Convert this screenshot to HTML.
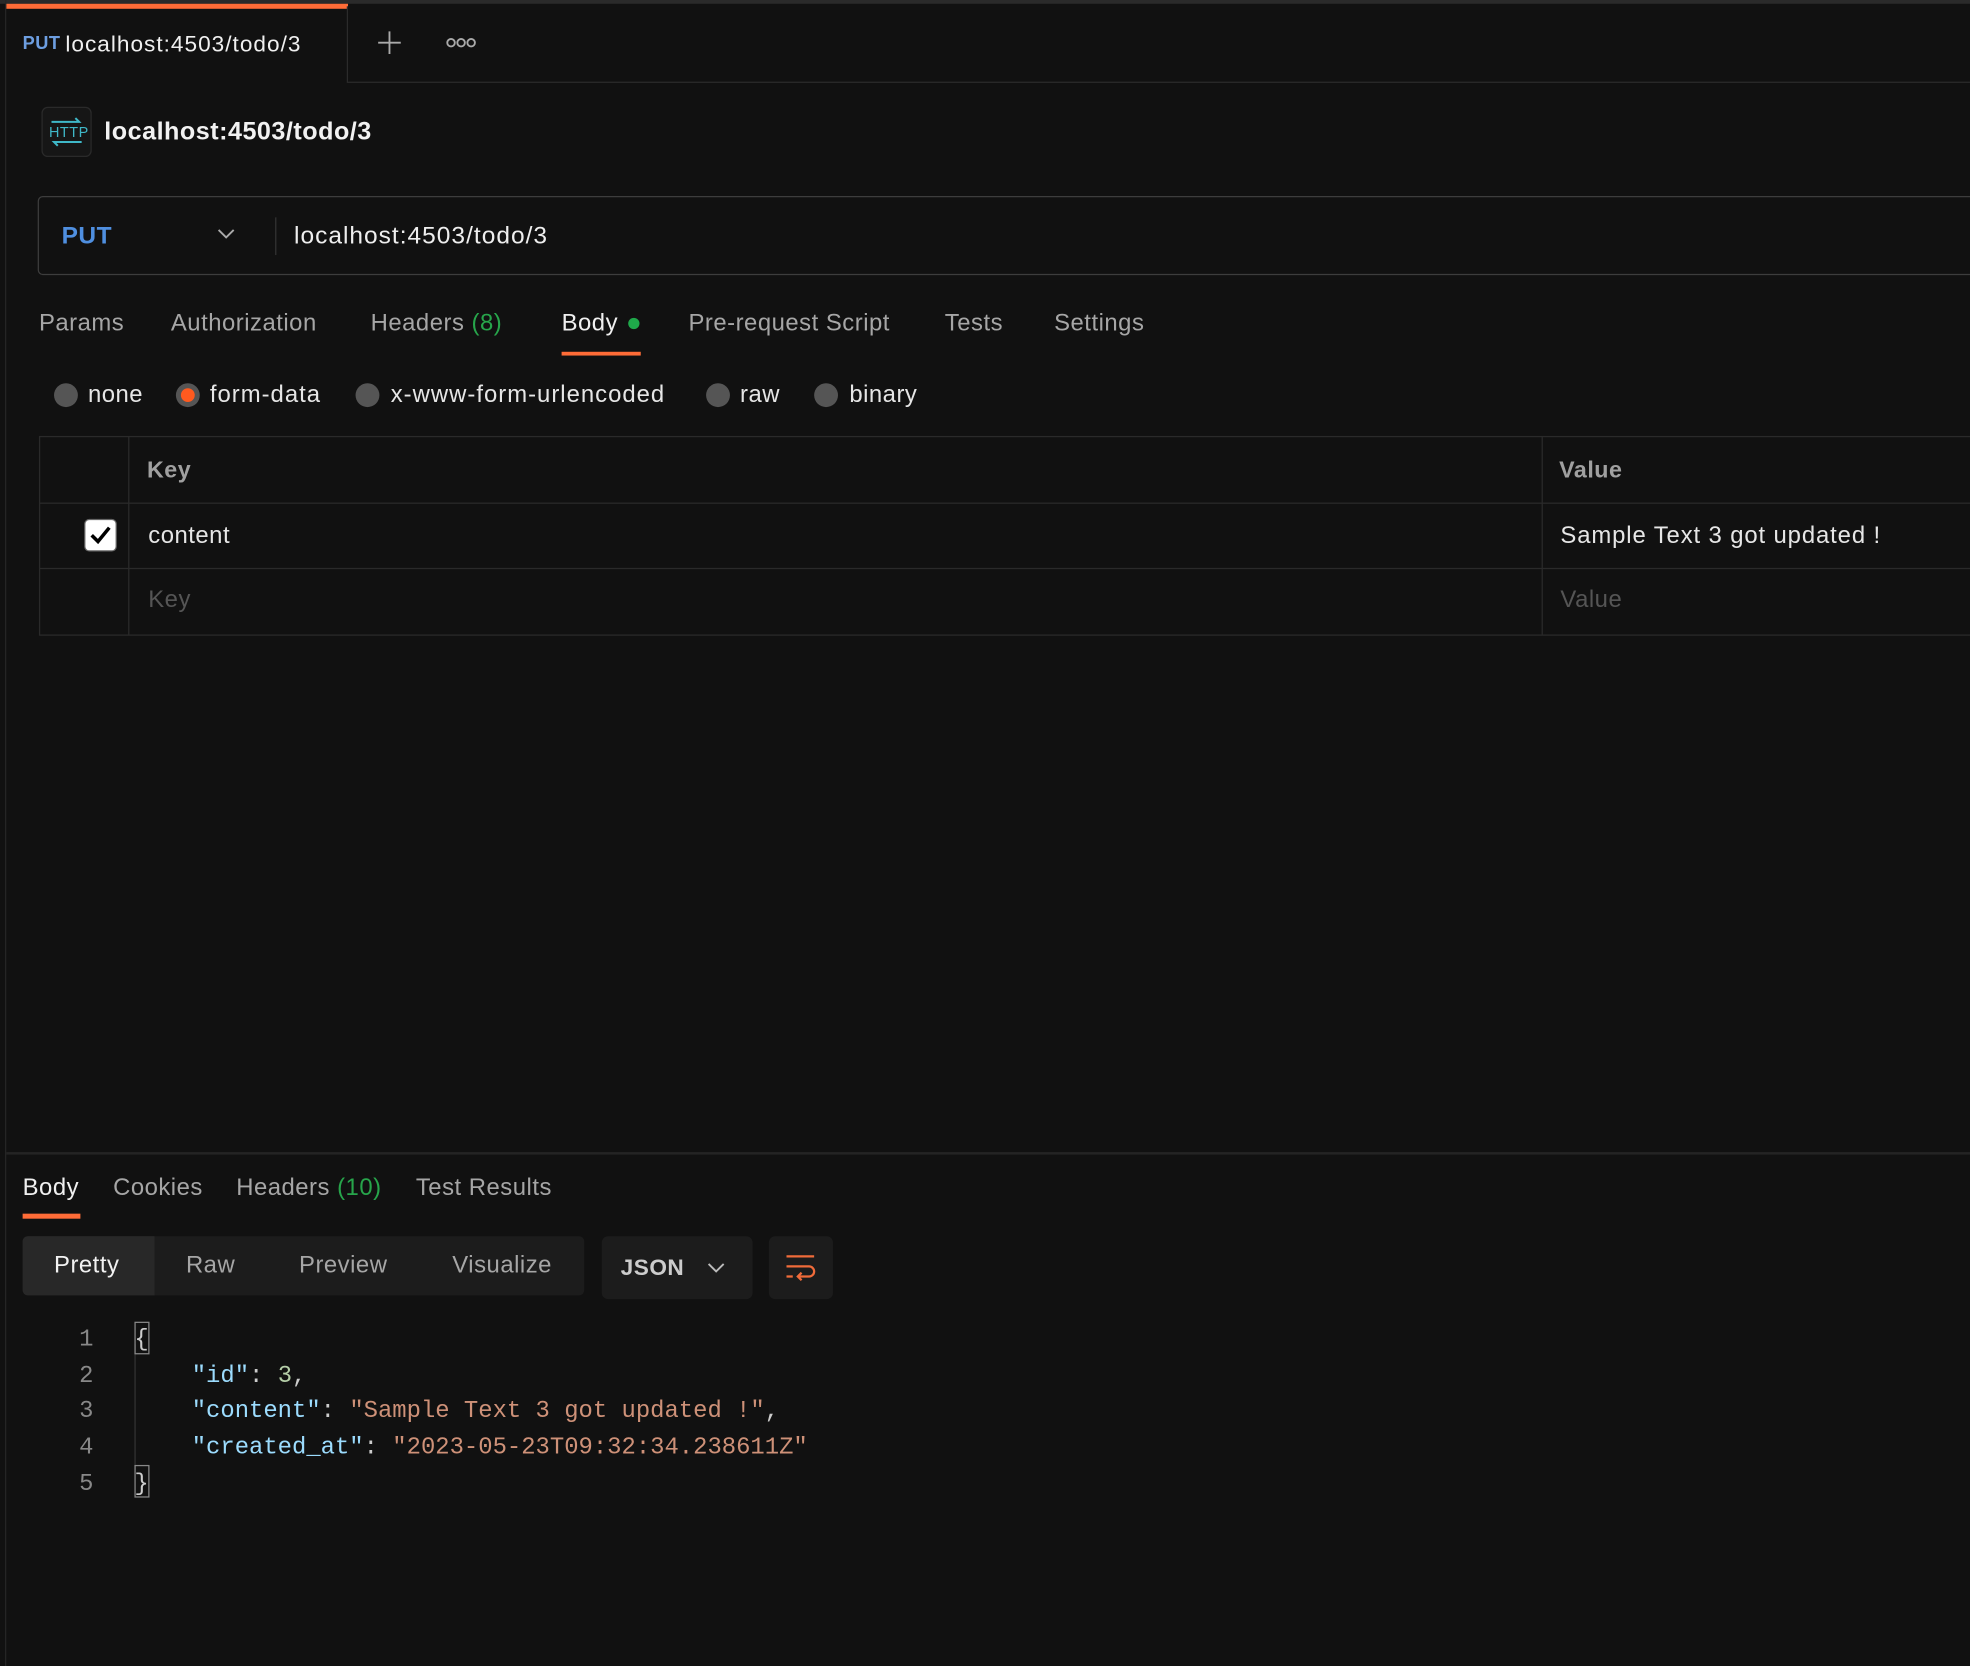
<!DOCTYPE html>
<html><head><meta charset="utf-8"><style>
html,body{margin:0;padding:0;background:#111111;width:1970px;height:1666px;overflow:hidden}
#w{position:absolute;left:0;top:0;width:1568px;height:1326px;transform:scale(1.25638);transform-origin:0 0;background:#111;font-family:"Liberation Sans",sans-serif;color:#e6e6e6;letter-spacing:0.4px}
.a{position:absolute;white-space:nowrap}
.mono{font-family:"Liberation Mono",monospace;font-size:19px;letter-spacing:0}
.gray{color:#a6a6a6}
</style></head><body><div id="w">
<div class="a" style="left:0;top:0;width:1568px;height:3px;background:#2a2a2a"></div>
<div class="a" style="left:5px;top:3px;width:272px;height:4px;background:#ff6c37"></div>
<div class="a" style="left:276px;top:5px;width:1px;height:61px;background:#2b2b2b"></div>
<div class="a" style="left:277px;top:65px;width:1291px;height:1px;background:#2b2b2b"></div>
<div class="a" style="left:4px;top:0;width:1px;height:1326px;background:#262626"></div>
<div class="a" style="left:18px;top:27px;font-size:14.5px;font-weight:bold;color:#6d9ee0">PUT</div>
<div class="a" style="left:52px;top:25px;font-size:18px;color:#f0f0f0;letter-spacing:0.8px">localhost:4503/todo/3</div>
<svg class="a" style="left:299px;top:23px" width="22" height="22"><path d="M11 2v18M2 11h18" stroke="#aaa" stroke-width="1.5"/></svg>
<svg class="a" style="left:355px;top:29px" width="26" height="10"><circle cx="4" cy="5" r="3" stroke="#aaa" stroke-width="1.5" fill="none"/><circle cx="12" cy="5" r="3" stroke="#aaa" stroke-width="1.5" fill="none"/><circle cx="20" cy="5" r="3" stroke="#aaa" stroke-width="1.5" fill="none"/></svg>
<div class="a" style="left:33px;top:85px;width:38px;height:38px;border:1px solid #2a2a2a;border-radius:5px;background:#161616"></div>
<svg class="a" style="left:36px;top:88px" width="34" height="34" viewBox="0 0 34 34"><path d="M5 9h22l-3-3" stroke="#3fb8c8" stroke-width="1.6" fill="none"/><path d="M29 25H7l3 3" stroke="#3fb8c8" stroke-width="1.6" fill="none"/><text x="3" y="21" font-family="Liberation Sans Narrow,Liberation Sans" font-size="11.5" fill="#3fb8c8">HTTP</text></svg>
<div class="a" style="left:83px;top:94px;font-size:20px;font-weight:bold;color:#f2f2f2">localhost:4503/todo/3</div>
<div class="a" style="left:30px;top:156px;width:1560px;height:61px;border:1.5px solid #3d3d3d;border-radius:4px"></div>
<div class="a" style="left:49px;top:177px;font-size:19.5px;font-weight:bold;color:#4f8fe0">PUT</div>
<svg class="a" style="left:172px;top:181px" width="16" height="10"><path d="M2 2l6 6 6-6" stroke="#aaa" stroke-width="1.5" fill="none"/></svg>
<div class="a" style="left:219px;top:173px;width:1px;height:30px;background:#333"></div>
<div class="a" style="left:234px;top:177px;font-size:19.5px;color:#eee;letter-spacing:0.8px">localhost:4503/todo/3</div>
<div class="a gray" style="left:31px;top:247px;font-size:19px">Params</div>
<div class="a gray" style="left:136px;top:247px;font-size:19px">Authorization</div>
<div class="a gray" style="left:295px;top:247px;font-size:19px">Headers <span style="color:#27a54b">(8)</span></div>
<div class="a" style="left:447px;top:247px;font-size:19px;color:#f0f0f0">Body</div>
<div class="a" style="left:500px;top:253px;width:9px;height:9px;border-radius:50%;background:#1fa84a"></div>
<div class="a" style="left:447px;top:280px;width:63px;height:3px;background:#ff6c37"></div>
<div class="a gray" style="left:548px;top:247px;font-size:19px">Pre-request Script</div>
<div class="a gray" style="left:752px;top:247px;font-size:19px">Tests</div>
<div class="a gray" style="left:839px;top:247px;font-size:19px">Settings</div>
<div class="a" style="left:43px;top:305px;width:19px;height:19px;border-radius:50%;background:#555"></div>
<div class="a" style="left:70px;top:304px;font-size:19px">none</div>
<div class="a" style="left:140px;top:305px;width:19px;height:19px;border-radius:50%;background:#555"></div>
<div class="a" style="left:144px;top:309px;width:11px;height:11px;border-radius:50%;background:#ff5a1f"></div>
<div class="a" style="left:167px;top:304px;font-size:19px;letter-spacing:0.8px">form-data</div>
<div class="a" style="left:283px;top:305px;width:19px;height:19px;border-radius:50%;background:#555"></div>
<div class="a" style="left:311px;top:304px;font-size:19px;letter-spacing:0.8px">x-www-form-urlencoded</div>
<div class="a" style="left:562px;top:305px;width:19px;height:19px;border-radius:50%;background:#555"></div>
<div class="a" style="left:589px;top:304px;font-size:19px">raw</div>
<div class="a" style="left:648px;top:305px;width:19px;height:19px;border-radius:50%;background:#555"></div>
<div class="a" style="left:676px;top:304px;font-size:19px">binary</div>
<div class="a" style="left:31px;top:347px;width:1540px;height:157px;border:1px solid #2a2a2a"></div>
<div class="a" style="left:31px;top:400px;width:1540px;height:1px;background:#2a2a2a"></div>
<div class="a" style="left:31px;top:452px;width:1540px;height:1px;background:#2a2a2a"></div>
<div class="a" style="left:102px;top:347px;width:1px;height:158px;background:#2a2a2a"></div>
<div class="a" style="left:1227px;top:347px;width:1px;height:158px;background:#2a2a2a"></div>
<div class="a" style="left:117px;top:363px;font-size:18.5px;font-weight:bold;color:#a0a0a0">Key</div>
<div class="a" style="left:1241px;top:363px;font-size:18.5px;font-weight:bold;color:#a0a0a0">Value</div>
<div class="a" style="left:67px;top:413px;width:26px;height:26px;border-radius:4px;background:#fff;border:1px solid #666;box-sizing:border-box"></div>
<svg class="a" style="left:67px;top:413px" width="26" height="26"><path d="M6 13l5 5 9-11" stroke="#000" stroke-width="2.8" fill="none"/></svg>
<div class="a" style="left:118px;top:416px;font-size:19px">content</div>
<div class="a" style="left:1242px;top:416px;font-size:19px;letter-spacing:0.7px">Sample Text 3 got updated !</div>
<div class="a" style="left:118px;top:467px;font-size:19px;color:#555">Key</div>
<div class="a" style="left:1242px;top:467px;font-size:19px;color:#555">Value</div>
<div class="a" style="left:5px;top:917px;width:1563px;height:2px;background:#242424"></div>
<div class="a" style="left:18px;top:935px;font-size:19px;color:#f0f0f0">Body</div>
<div class="a" style="left:18px;top:966px;width:46px;height:4px;background:#ff6c37"></div>
<div class="a gray" style="left:90px;top:935px;font-size:19px">Cookies</div>
<div class="a gray" style="left:188px;top:935px;font-size:19px">Headers <span style="color:#27a54b">(10)</span></div>
<div class="a gray" style="left:331px;top:935px;font-size:19px">Test Results</div>
<div class="a" style="left:18px;top:984px;width:447px;height:47px;border-radius:4px;background:#1c1c1c"></div>
<div class="a" style="left:18px;top:984px;width:105px;height:47px;border-radius:4px 0 0 4px;background:#282828"></div>
<div class="a" style="left:43px;top:997px;font-size:19px;color:#f2f2f2">Pretty</div>
<div class="a gray" style="left:148px;top:997px;font-size:19px">Raw</div>
<div class="a gray" style="left:238px;top:997px;font-size:19px">Preview</div>
<div class="a gray" style="left:360px;top:997px;font-size:19px">Visualize</div>
<div class="a" style="left:479px;top:984px;width:120px;height:50px;border-radius:5px;background:#1c1c1c"></div>
<div class="a" style="left:494px;top:999px;font-size:18px;font-weight:bold;color:#ccc">JSON</div>
<svg class="a" style="left:563px;top:1004px" width="14" height="10"><path d="M1 2l6 6 6-6" stroke="#bbb" stroke-width="1.5" fill="none"/></svg>
<div class="a" style="left:612px;top:984px;width:51px;height:50px;border-radius:5px;background:#1c1c1c"></div>
<svg class="a" style="left:624px;top:996px" width="28" height="28"><path d="M2 4h22M2 12h18a4 4 0 0 1 0 8h-9M14 17l-3 3 3 3M2 20h5" stroke="#f06b3a" stroke-width="1.8" fill="none"/></svg>
<div class="a mono" style="left:63px;top:1052px;color:#888;line-height:28.7px">1<br>2<br>3<br>4<br>5</div>
<div class="a" style="left:107px;top:1070px;width:1px;height:100px;background:#333"></div>
<div class="a" style="left:107px;top:1052px;width:10px;height:24px;border:1px solid #888"></div>
<div class="a" style="left:107px;top:1166px;width:10px;height:24px;border:1px solid #888"></div>
<div class="a mono" style="left:107px;top:1052px;line-height:28.7px;color:#ccc">{<br>&nbsp;&nbsp;&nbsp;&nbsp;<span style="color:#9cdcfe">"id"</span>: <span style="color:#b5cea8">3</span>,<br>&nbsp;&nbsp;&nbsp;&nbsp;<span style="color:#9cdcfe">"content"</span>: <span style="color:#ce9178">"Sample Text 3 got updated !"</span>,<br>&nbsp;&nbsp;&nbsp;&nbsp;<span style="color:#9cdcfe">"created_at"</span>: <span style="color:#ce9178">"2023-05-23T09:32:34.238611Z"</span><br>}</div>
</div></body></html>
